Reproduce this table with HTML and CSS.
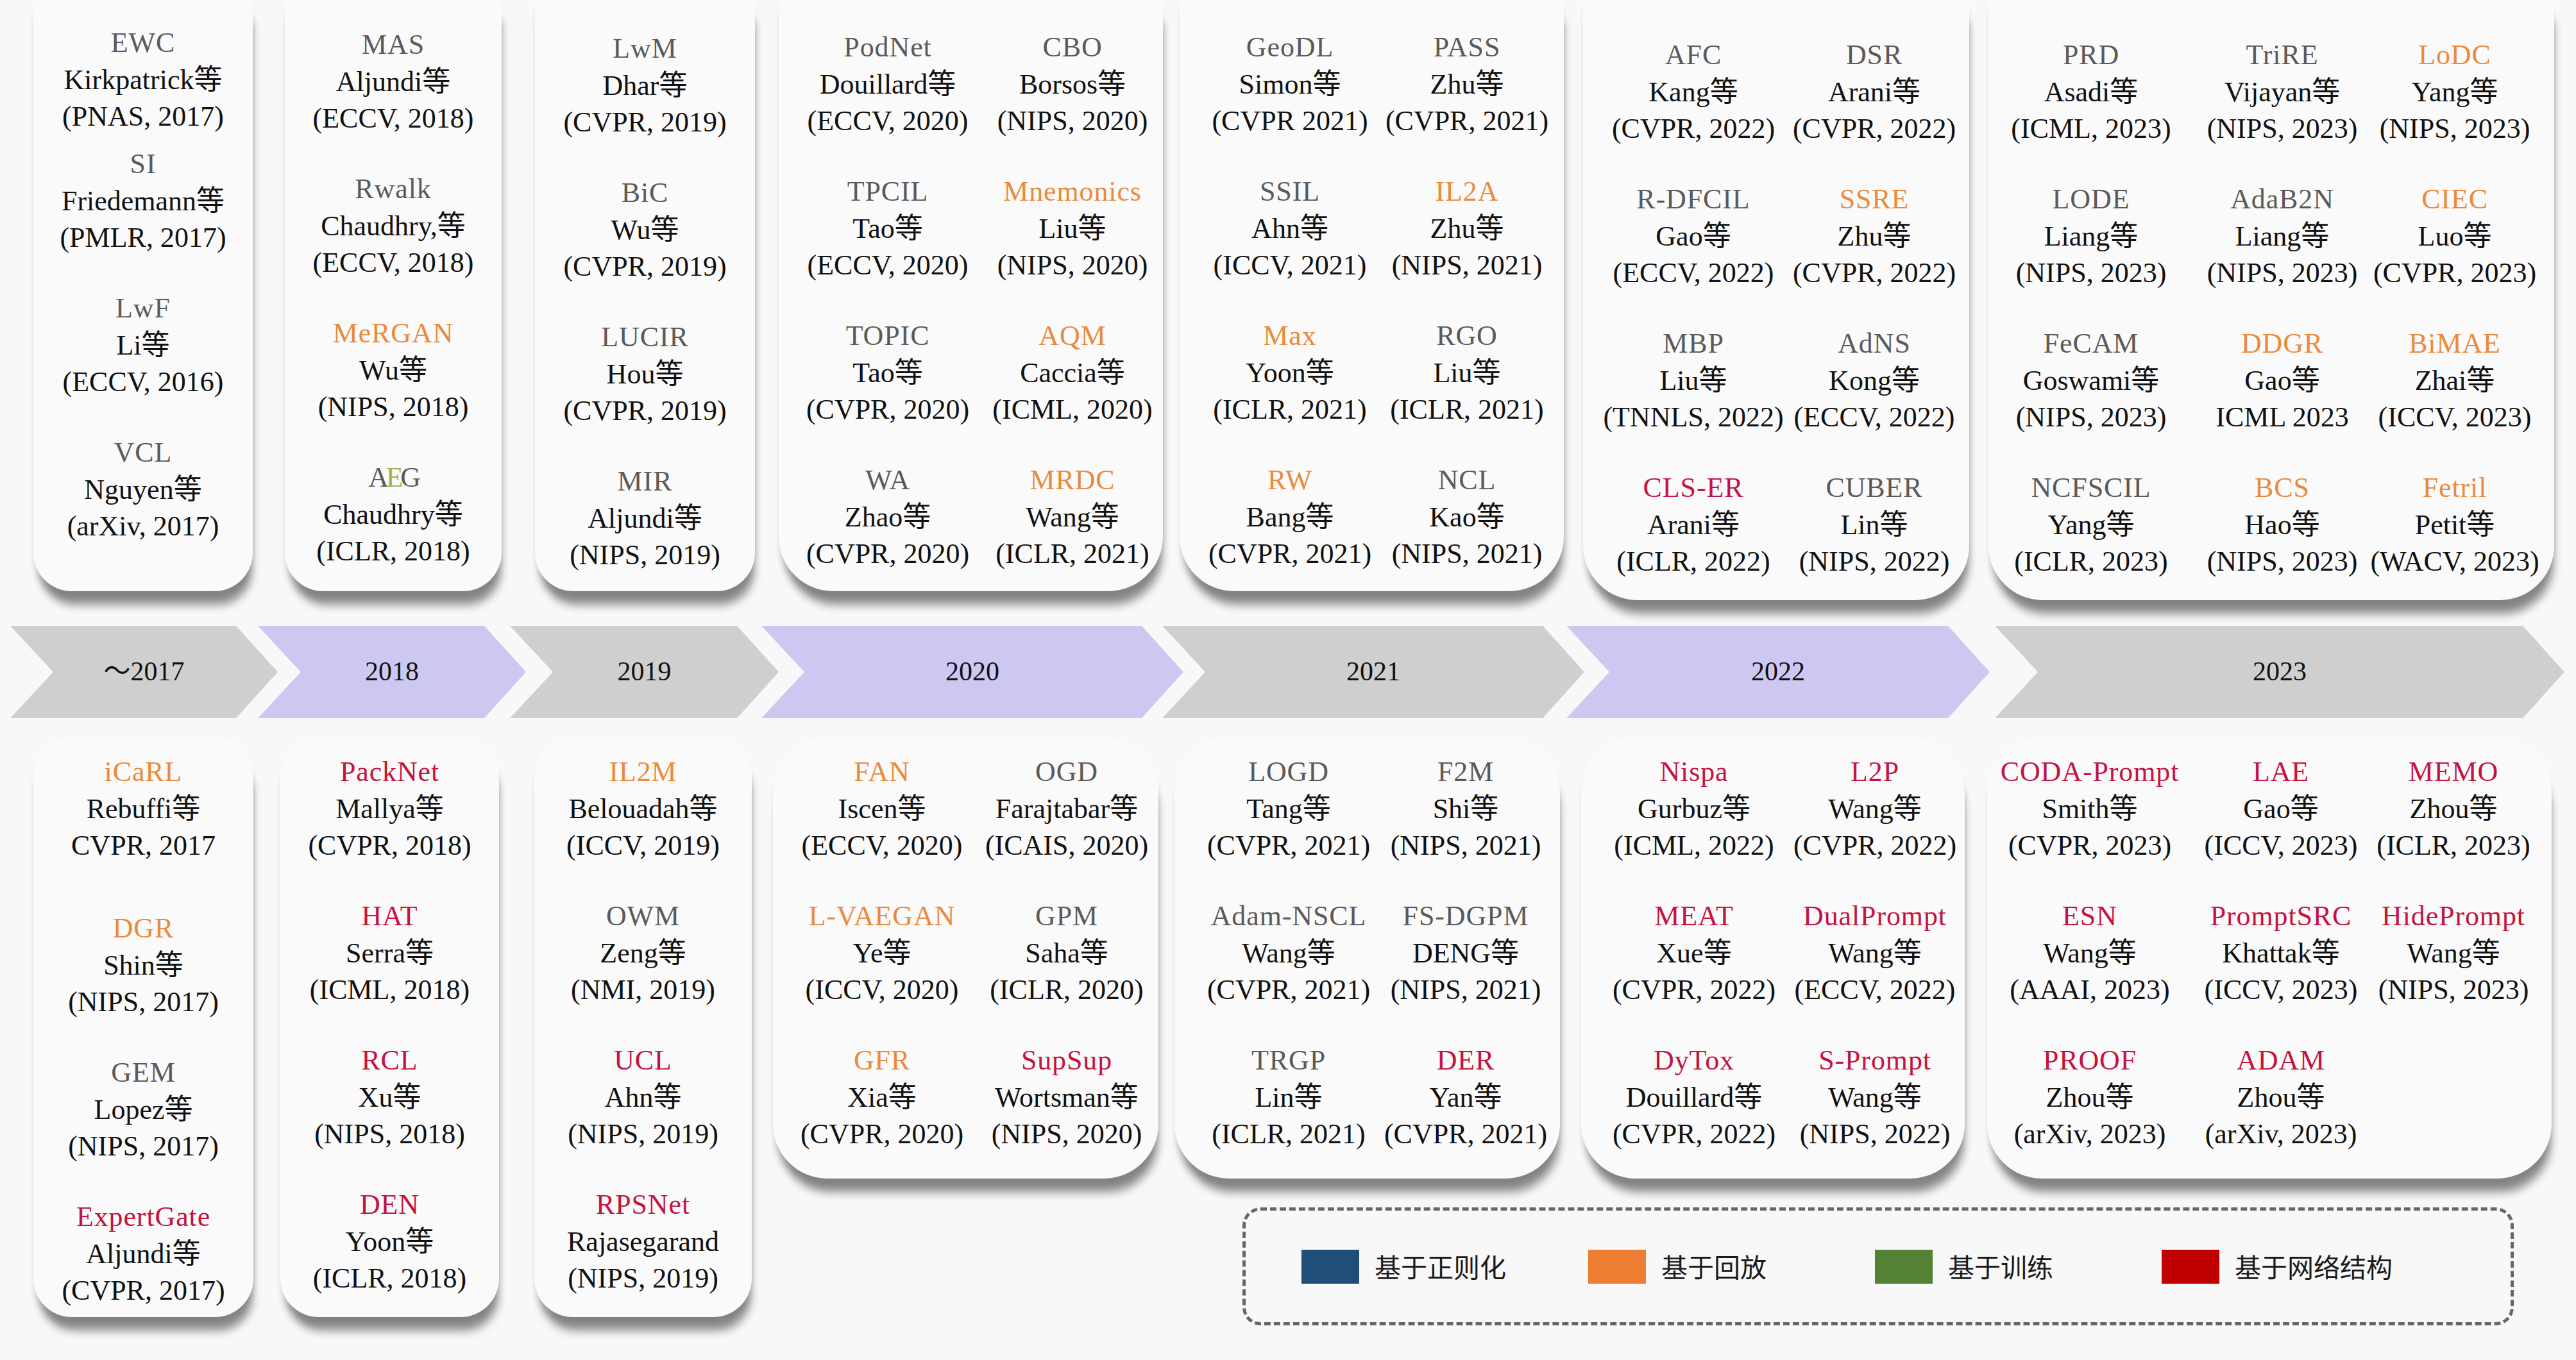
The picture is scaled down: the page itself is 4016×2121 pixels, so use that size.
FILE: index.html
```html
<!DOCTYPE html>
<html lang="zh-CN">
<head>
<meta charset="utf-8">
<title>持续学习方法时间线</title>
<link rel="stylesheet" href="styles.css">
</head>
<body>
<div class="page">

  <div class="cards top">
    <div class="card t1 narrow">
      <div class="entry first"><div class="nm g">EWC</div><div>Kirkpatrick等</div><div>(PNAS, 2017)</div></div>
      <div class="entry"><div class="nm g">SI</div><div>Friedemann等</div><div>(PMLR, 2017)</div></div>
      <div class="entry"><div class="nm g">LwF</div><div>Li等</div><div>(ECCV, 2016)</div></div>
      <div class="entry"><div class="nm g">VCL</div><div>Nguyen等</div><div>(arXiv, 2017)</div></div>
    </div>
    <div class="card t2 narrow">
      <div class="entry"><div class="nm g">MAS</div><div>Aljundi等</div><div>(ECCV, 2018)</div></div>
      <div class="entry"><div class="nm g">Rwalk</div><div>Chaudhry,等</div><div>(ECCV, 2018)</div></div>
      <div class="entry"><div class="nm o">MeRGAN</div><div>Wu等</div><div>(NIPS, 2018)</div></div>
      <div class="entry"><div class="nm g agem">A<span class="gr">E</span>G</div><div>Chaudhry等</div><div>(ICLR, 2018)</div></div>
    </div>
    <div class="card t3 narrow">
      <div class="entry"><div class="nm g">LwM</div><div>Dhar等</div><div>(CVPR, 2019)</div></div>
      <div class="entry"><div class="nm g">BiC</div><div>Wu等</div><div>(CVPR, 2019)</div></div>
      <div class="entry"><div class="nm g">LUCIR</div><div>Hou等</div><div>(CVPR, 2019)</div></div>
      <div class="entry"><div class="nm g">MIR</div><div>Aljundi等</div><div>(NIPS, 2019)</div></div>
    </div>
    <div class="card t4 wide two c2020">
      <div class="entry"><div class="nm g">PodNet</div><div>Douillard等</div><div>(ECCV, 2020)</div></div>
      <div class="entry"><div class="nm g">CBO</div><div>Borsos等</div><div>(NIPS, 2020)</div></div>
      <div class="entry"><div class="nm g">TPCIL</div><div>Tao等</div><div>(ECCV, 2020)</div></div>
      <div class="entry"><div class="nm o">Mnemonics</div><div>Liu等</div><div>(NIPS, 2020)</div></div>
      <div class="entry"><div class="nm g">TOPIC</div><div>Tao等</div><div>(CVPR, 2020)</div></div>
      <div class="entry"><div class="nm o">AQM</div><div>Caccia等</div><div>(ICML, 2020)</div></div>
      <div class="entry"><div class="nm g">WA</div><div>Zhao等</div><div>(CVPR, 2020)</div></div>
      <div class="entry"><div class="nm o">MRDC</div><div>Wang等</div><div>(ICLR, 2021)</div></div>
    </div>
    <div class="card t5 wide two c2021">
      <div class="entry"><div class="nm g">GeoDL</div><div>Simon等</div><div>(CVPR 2021)</div></div>
      <div class="entry"><div class="nm g">PASS</div><div>Zhu等</div><div>(CVPR, 2021)</div></div>
      <div class="entry"><div class="nm g">SSIL</div><div>Ahn等</div><div>(ICCV, 2021)</div></div>
      <div class="entry"><div class="nm o">IL2A</div><div>Zhu等</div><div>(NIPS, 2021)</div></div>
      <div class="entry"><div class="nm o">Max</div><div>Yoon等</div><div>(ICLR, 2021)</div></div>
      <div class="entry"><div class="nm g">RGO</div><div>Liu等</div><div>(ICLR, 2021)</div></div>
      <div class="entry"><div class="nm o">RW</div><div>Bang等</div><div>(CVPR, 2021)</div></div>
      <div class="entry"><div class="nm g">NCL</div><div>Kao等</div><div>(NIPS, 2021)</div></div>
    </div>
    <div class="card t6 wide two c2022">
      <div class="entry"><div class="nm g">AFC</div><div>Kang等</div><div>(CVPR, 2022)</div></div>
      <div class="entry"><div class="nm g">DSR</div><div>Arani等</div><div>(CVPR, 2022)</div></div>
      <div class="entry"><div class="nm g">R-DFCIL</div><div>Gao等</div><div>(ECCV, 2022)</div></div>
      <div class="entry"><div class="nm o">SSRE</div><div>Zhu等</div><div>(CVPR, 2022)</div></div>
      <div class="entry"><div class="nm g">MBP</div><div>Liu等</div><div>(TNNLS, 2022)</div></div>
      <div class="entry"><div class="nm g">AdNS</div><div>Kong等</div><div>(ECCV, 2022)</div></div>
      <div class="entry"><div class="nm r">CLS-ER</div><div>Arani等</div><div>(ICLR, 2022)</div></div>
      <div class="entry"><div class="nm g">CUBER</div><div>Lin等</div><div>(NIPS, 2022)</div></div>
    </div>
    <div class="card t7 wide three">
      <div class="entry"><div class="nm g">PRD</div><div>Asadi等</div><div>(ICML, 2023)</div></div>
      <div class="entry"><div class="nm g">TriRE</div><div>Vijayan等</div><div>(NIPS, 2023)</div></div>
      <div class="entry"><div class="nm o">LoDC</div><div>Yang等</div><div>(NIPS, 2023)</div></div>
      <div class="entry"><div class="nm g">LODE</div><div>Liang等</div><div>(NIPS, 2023)</div></div>
      <div class="entry"><div class="nm g">AdaB2N</div><div>Liang等</div><div>(NIPS, 2023)</div></div>
      <div class="entry"><div class="nm o">CIEC</div><div>Luo等</div><div>(CVPR, 2023)</div></div>
      <div class="entry"><div class="nm g">FeCAM</div><div>Goswami等</div><div>(NIPS, 2023)</div></div>
      <div class="entry"><div class="nm o">DDGR</div><div>Gao等</div><div>ICML 2023</div></div>
      <div class="entry"><div class="nm o">BiMAE</div><div>Zhai等</div><div>(ICCV, 2023)</div></div>
      <div class="entry"><div class="nm g">NCFSCIL</div><div>Yang等</div><div>(ICLR, 2023)</div></div>
      <div class="entry"><div class="nm o">BCS</div><div>Hao等</div><div>(NIPS, 2023)</div></div>
      <div class="entry"><div class="nm o">Fetril</div><div>Petit等</div><div>(WACV, 2023)</div></div>
    </div>
  </div>

  <div class="band">
    <div class="chev grey v1">～2017</div>
    <div class="chev lav v2">2018</div>
    <div class="chev grey v3">2019</div>
    <div class="chev lav v4">2020</div>
    <div class="chev grey v5">2021</div>
    <div class="chev lav v6">2022</div>
    <div class="chev grey v7">2023</div>
  </div>

  <div class="cards bottom">
    <div class="card b1 narrow">
      <div class="entry first"><div class="nm o">iCaRL</div><div>Rebuffi等</div><div>CVPR, 2017</div></div>
      <div class="entry"><div class="nm o">DGR</div><div>Shin等</div><div>(NIPS, 2017)</div></div>
      <div class="entry"><div class="nm g">GEM</div><div>Lopez等</div><div>(NIPS, 2017)</div></div>
      <div class="entry"><div class="nm r">ExpertGate</div><div>Aljundi等</div><div>(CVPR, 2017)</div></div>
    </div>
    <div class="card b2 narrow">
      <div class="entry"><div class="nm r">PackNet</div><div>Mallya等</div><div>(CVPR, 2018)</div></div>
      <div class="entry"><div class="nm r">HAT</div><div>Serra等</div><div>(ICML, 2018)</div></div>
      <div class="entry"><div class="nm r">RCL</div><div>Xu等</div><div>(NIPS, 2018)</div></div>
      <div class="entry"><div class="nm r">DEN</div><div>Yoon等</div><div>(ICLR, 2018)</div></div>
    </div>
    <div class="card b3 narrow">
      <div class="entry"><div class="nm o">IL2M</div><div>Belouadah等</div><div>(ICCV, 2019)</div></div>
      <div class="entry"><div class="nm g">OWM</div><div>Zeng等</div><div>(NMI, 2019)</div></div>
      <div class="entry"><div class="nm r">UCL</div><div>Ahn等</div><div>(NIPS, 2019)</div></div>
      <div class="entry"><div class="nm r">RPSNet</div><div>Rajasegarand</div><div>(NIPS, 2019)</div></div>
    </div>

    <div class="right-col">
      <div class="cards-sub">
        <div class="card b4 wide two c2020">
          <div class="entry"><div class="nm o">FAN</div><div>Iscen等</div><div>(ECCV, 2020)</div></div>
          <div class="entry"><div class="nm g">OGD</div><div>Farajtabar等</div><div>(ICAIS, 2020)</div></div>
          <div class="entry"><div class="nm o">L-VAEGAN</div><div>Ye等</div><div>(ICCV, 2020)</div></div>
          <div class="entry"><div class="nm g">GPM</div><div>Saha等</div><div>(ICLR, 2020)</div></div>
          <div class="entry"><div class="nm o">GFR</div><div>Xia等</div><div>(CVPR, 2020)</div></div>
          <div class="entry"><div class="nm r">SupSup</div><div>Wortsman等</div><div>(NIPS, 2020)</div></div>
        </div>
        <div class="card b5 wide two c2021">
          <div class="entry"><div class="nm g">LOGD</div><div>Tang等</div><div>(CVPR, 2021)</div></div>
          <div class="entry"><div class="nm g">F2M</div><div>Shi等</div><div>(NIPS, 2021)</div></div>
          <div class="entry"><div class="nm g">Adam-NSCL</div><div>Wang等</div><div>(CVPR, 2021)</div></div>
          <div class="entry"><div class="nm g">FS-DGPM</div><div>DENG等</div><div>(NIPS, 2021)</div></div>
          <div class="entry"><div class="nm g">TRGP</div><div>Lin等</div><div>(ICLR, 2021)</div></div>
          <div class="entry"><div class="nm r">DER</div><div>Yan等</div><div>(CVPR, 2021)</div></div>
        </div>
        <div class="card b6 wide two c2022">
          <div class="entry"><div class="nm r">Nispa</div><div>Gurbuz等</div><div>(ICML, 2022)</div></div>
          <div class="entry"><div class="nm r">L2P</div><div>Wang等</div><div>(CVPR, 2022)</div></div>
          <div class="entry"><div class="nm r">MEAT</div><div>Xue等</div><div>(CVPR, 2022)</div></div>
          <div class="entry"><div class="nm r">DualPrompt</div><div>Wang等</div><div>(ECCV, 2022)</div></div>
          <div class="entry"><div class="nm r">DyTox</div><div>Douillard等</div><div>(CVPR, 2022)</div></div>
          <div class="entry"><div class="nm r">S-Prompt</div><div>Wang等</div><div>(NIPS, 2022)</div></div>
        </div>
        <div class="card b7 wide three">
          <div class="entry"><div class="nm r">CODA-Prompt</div><div>Smith等</div><div>(CVPR, 2023)</div></div>
          <div class="entry"><div class="nm r">LAE</div><div>Gao等</div><div>(ICCV, 2023)</div></div>
          <div class="entry"><div class="nm r">MEMO</div><div>Zhou等</div><div>(ICLR, 2023)</div></div>
          <div class="entry"><div class="nm r">ESN</div><div>Wang等</div><div>(AAAI, 2023)</div></div>
          <div class="entry"><div class="nm r">PromptSRC</div><div>Khattak等</div><div>(ICCV, 2023)</div></div>
          <div class="entry"><div class="nm r">HidePrompt</div><div>Wang等</div><div>(NIPS, 2023)</div></div>
          <div class="entry"><div class="nm r">PROOF</div><div>Zhou等</div><div>(arXiv, 2023)</div></div>
          <div class="entry"><div class="nm r">ADAM</div><div>Zhou等</div><div>(arXiv, 2023)</div></div>
        </div>
      </div>

      <div class="legend">
        <div class="leg-item"><span class="sw sw-blue"></span><span class="leg-text">基于正则化</span></div>
        <div class="leg-item"><span class="sw sw-orange"></span><span class="leg-text">基于回放</span></div>
        <div class="leg-item"><span class="sw sw-green"></span><span class="leg-text">基于训练</span></div>
        <div class="leg-item"><span class="sw sw-red"></span><span class="leg-text">基于网络结构</span></div>
      </div>
    </div>
  </div>

</div>
</body>
</html>
```

FILE: styles.css
```css
html, body {
  margin: 0;
  padding: 0;
}

body {
  width: 4016px;
  height: 2121px;
  overflow: hidden;
  background: #f8f8f8;
  color: #111;
  font-family: "Liberation Serif", "Noto Sans CJK SC", serif;
  font-size: 44px;
  line-height: 57.5px;
}

.page {
  width: 4016px;
  height: 2121px;
}

/* ---------- card rows ---------- */
.cards {
  display: flex;
  align-items: flex-start;
  padding-left: 52px;
}

.cards.top {
  position: relative;
  z-index: 2;
}

.cards.bottom {
  margin-top: 30px;
}

.cards-sub {
  display: flex;
  align-items: flex-start;
}

.right-col {
  display: flex;
  flex-direction: column;
  margin-left: 33px;
}

.card {
  flex: none;
  box-sizing: border-box;
  background: #fafafa;
  display: grid;
  grid-template-columns: 1fr;
  align-content: start;
  row-gap: 52.5px;
  box-shadow: 5px 28px 14px -6px rgba(0, 0, 0, 0.4),
              0 14px 10px -2px rgba(0, 0, 0, 0.12);
}

.cards.top .card.narrow { border-radius: 0 0 60px 60px; }
.cards.top .card.wide { border-radius: 0 0 85px 85px; }
.cards.bottom .card.narrow { border-radius: 60px; }
.cards.bottom .card.wide { border-radius: 85px; }

.card.two {
  grid-template-columns: 288px 288px;
}

.card.two.c2021 { grid-template-columns: 276px 276px; }
.card.two.c2022 { grid-template-columns: 282px 282px; }

.card.three {
  grid-template-columns: 300px 296px 242px;
  padding-left: 10px;
}

/* top row geometry */
.t1 { width: 342px; height: 922px; padding-top: 38px; }
.t2 { width: 338px; height: 922px; padding-top: 41px; margin-left: 50px; }
.t3 { width: 343px; height: 922px; padding-top: 47px; margin-left: 52px; }
.t4 { width: 599px; height: 922px; padding-top: 45px; padding-left: 26px; margin-left: 37px; }
.t5 { width: 599px; height: 922px; padding-top: 45px; padding-left: 34px; margin-left: 26px; }
.t6 { width: 602px; height: 936px; padding-top: 57px; padding-left: 31px; margin-left: 30px; }
.t7 { width: 882px; height: 936px; padding-top: 57px; margin-left: 30px; }

.t1 .entry.first { margin-bottom: -36px; }

/* bottom row geometry */
.b1 { width: 343px; height: 904px; padding-top: 25px; }
.b2 { width: 341px; height: 904px; padding-top: 25px; margin-left: 42px; }
.b3 { width: 339px; height: 904px; padding-top: 25px; margin-left: 55px; }
.b4 { width: 601px; height: 688px; padding-top: 25px; padding-left: 26px; }
.b5 { width: 601px; height: 688px; padding-top: 25px; padding-left: 40px; margin-left: 25px; }
.b6 { width: 598px; height: 688px; padding-top: 25px; padding-left: 35px; margin-left: 33px; }
.b7 { width: 880px; height: 688px; padding-top: 25px; margin-left: 35px; }

.b1 .entry.first { margin-bottom: 19px; }

/* ---------- entries ---------- */
.entry {
  display: flex;
  flex-direction: column;
  align-items: center;
  white-space: nowrap;
}

.nm { letter-spacing: 0.02em; }
.nm.g { color: #5a5a5a; }
.nm.o { color: #ea8a3d; }
.nm.r { color: #c4133f; }

.agem { letter-spacing: -0.1em; }
.agem .gr { color: #9cb54a; }

/* ---------- timeline band ---------- */
.band {
  display: flex;
  height: 144px;
  margin-top: 40px;
  padding-left: 16px;
  font-size: 42px;
  color: #111;
}

.chev {
  flex: none;
  height: 144px;
  display: flex;
  align-items: center;
  justify-content: center;
  clip-path: polygon(0 0, calc(100% - 65px) 0, 100% 50%, calc(100% - 65px) 100%, 0 100%, 67px 50%);
}

.chev.grey { background: #cfcfcf; }
.chev.lav { background: #cdc8f2; }

.v1 { width: 417px; }
.v2 { width: 418px; margin-left: -31px; }
.v3 { width: 419px; margin-left: -25px; }
.v4 { width: 658px; margin-left: -27px; }
.v5 { width: 658px; margin-left: -33px; }
.v6 { width: 660px; margin-left: -28px; }
.v7 { width: 888px; margin-left: 8px; }

/* ---------- legend ---------- */
.legend {
  box-sizing: border-box;
  width: 1982px;
  height: 184px;
  margin-top: 45px;
  margin-left: 732px;
  padding-left: 87px;
  border: 5px dashed #666;
  border-radius: 28px;
  display: flex;
  align-items: center;
  font-family: "Noto Sans CJK SC", "Liberation Sans", sans-serif;
  font-size: 41px;
  color: #1a1a1a;
}

.leg-item {
  flex: none;
  width: 447px;
  display: flex;
  align-items: center;
}

.sw {
  flex: none;
  width: 90px;
  height: 53px;
  margin-right: 24px;
}

.sw-blue { background: #1f4e79; }
.sw-orange { background: #ed7d31; }
.sw-green { background: #548235; }
.sw-red { background: #c00000; }
```
